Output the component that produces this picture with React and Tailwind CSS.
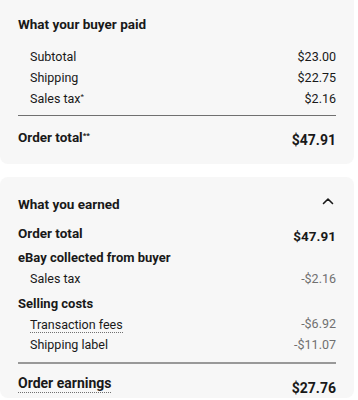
const ink = 'text-[#191919]'

function Row({ label, amount, muted, dotted }) {
  return (
    <div className="flex h-[21px] items-center justify-between pl-3 text-[12.5px]">
      <span className={dotted ? 'border-b border-dotted border-[#707070] leading-[15px]' : ''}>{label}</span>
      <span className={muted ? 'text-[#707070]' : ''}>{amount}</span>
    </div>
  )
}

function Chevron() {
  return (
    <svg width="12" height="8" viewBox="0 0 12 8" fill="none" className="mt-[-6px]">
      <path d="M1.5 6.5 6 2l4.5 4.5" stroke="#191919" strokeWidth="1.6" strokeLinecap="round" strokeLinejoin="round" />
    </svg>
  )
}

export default function App() {
  return (
    <div className={`h-[400px] w-[358px] overflow-hidden bg-white ${ink}`} style={{ fontFamily: 'Roboto, "Liberation Sans", sans-serif' }}>
      <div className="flex w-[354px] flex-col gap-[13px]">
        {/* Buyer paid */}
        <div className="rounded-b-lg bg-[#f7f7f7] px-[18px] pb-[14px] pt-[14px]">
          <h2 className="text-[13.5px] font-bold leading-5">What your buyer paid</h2>
          <div className="mt-[13px]">
            <Row label="Subtotal" amount="$23.00" />
            <Row label="Shipping" amount="$22.75" />
            <Row label={<>Sales tax<sup className="text-[8px]">*</sup></>} amount="$2.16" />
          </div>
          <div className="mt-[5px] h-px bg-[#707070]" />
          <div className="mt-[11px] flex items-start justify-between">
            <span className="text-[13.5px] font-bold leading-5">
              Order total<sup className="text-[8px]">**</sup>
            </span>
            <span className="mt-[3px] text-[14px] font-bold leading-5">$47.91</span>
          </div>
        </div>

        {/* Earned */}
        <div className="rounded-lg bg-[#f7f7f7] px-[18px] pt-[17px]">
          <div className="flex h-5 items-center justify-between">
            <h2 className="text-[13.5px] font-bold">What you earned</h2>
            <div className="pr-[2px]"><Chevron /></div>
          </div>
          <div className="mt-[9px] flex items-start justify-between">
            <span className="text-[13.5px] font-bold leading-5">Order total</span>
            <span className="mt-[3px] text-[13.5px] font-bold leading-5">$47.91</span>
          </div>
          <div className="mt-[2px] text-[13px] font-bold leading-5">eBay collected from buyer</div>
          <div className="mt-[0.5px]">
            <Row label="Sales tax" amount="-$2.16" muted />
          </div>
          <div className="mt-[4px] text-[13px] font-bold leading-5">Selling costs</div>
          <div className="mt-[0.5px]">
            <Row label="Transaction fees" amount="-$6.92" muted dotted />
            <Row label="Shipping label" amount="-$11.07" muted />
          </div>
          <div className="mt-[6px] h-[2px] bg-[#999]" />
          <div className="mt-[11px] flex items-start justify-between">
            <span className="border-b border-dotted border-[#707070] text-[14px] font-bold leading-[17px]">Order earnings</span>
            <span className="mt-[3px] text-[14px] font-bold leading-5">$27.76</span>
          </div>
        </div>
      </div>
    </div>
  )
}
